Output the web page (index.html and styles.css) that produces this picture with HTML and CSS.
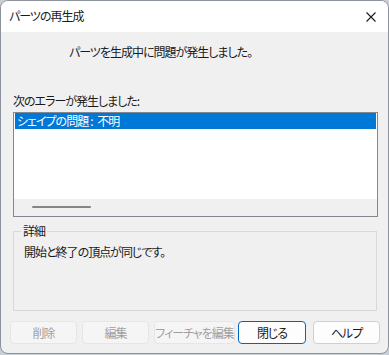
FILE: index.html
```html
<!DOCTYPE html>
<html lang="ja">
<head>
  <meta charset="UTF-8" />
  <title>パーツの再生成</title>
  <link rel="stylesheet" href="styles.css">
</head>
<body>

<div class="window">
  <div class="titlebar">
    <span class="title">パーツの再生成</span>
    <svg class="close" width="10" height="10" viewBox="0 0 10 10">
      <path d="M0.5 0.5 L9.5 9.5 M9.5 0.5 L0.5 9.5" stroke="#1a1a1a" stroke-width="1.1" fill="none"/>
    </svg>
  </div>

  <div class="content">
    <p class="message">パーツを生成中に問題が発生しました。</p>

    <p class="label">次のエラーが発生しました:</p>
    <div class="listbox">
      <div class="list-items">
        <div class="list-item selected">シェイプの問題<span class="colon">:</span> 不明</div>
      </div>
      <div class="hscroll"><span class="thumb"></span></div>
    </div>

    <fieldset class="group">
      <legend>詳細</legend>
      <p class="detail">開始と終了の頂点が同じです。</p>
    </fieldset>

    <div class="buttons">
      <button class="btn" disabled>削除</button>
      <button class="btn" disabled>編集</button>
      <button class="btn wide" disabled>フィーチャを編集</button>
      <button class="btn default">閉じる</button>
      <button class="btn">ヘルプ</button>
    </div>
  </div>
</div>

</body>
</html>
```

FILE: styles.css
```css
* {
  box-sizing: border-box;
}

body {
  margin: 0;
  background: #c8ced8;
  font-family: "Noto Sans CJK JP", "Noto Sans", sans-serif;
  font-size: 12px;
  font-feature-settings: "palt";
  letter-spacing: -1px;
  color: #1a1a1a;
}

.window {
  width: 389px;
  height: 354px;
  background: #f0f0f0;
  border: 1px solid #8d939c;
  border-radius: 8px;
  overflow: hidden;
}

.titlebar {
  height: 31px;
  background: #fff;
  display: flex;
  align-items: center;
  justify-content: space-between;
  padding: 0 12px 0 8px;
}

.title {
  line-height: 16px;
  margin-top: -1px;
}

.close {
  margin-top: 1px;
}

.content {
  padding: 0 11px 0 12px;
}

p {
  margin: 0;
  line-height: 16px;
}

.message {
  margin-top: 12px;
  padding-left: 56px;
}

.label {
  margin-top: 33px;
}

.listbox {
  margin-top: 3px;
  width: 365px;
  height: 105px;
  border: 1px solid #828790;
  background: #fff;
  display: flex;
  flex-direction: column;
}

.list-items {
  flex: 1;
  padding: 0 1px;
}

.list-item {
  height: 16px;
  line-height: 15px;
  padding-left: 2px;
  white-space: pre;
}

.list-item .colon {
  margin: 0 3px 0 2px;
}

.list-item.selected {
  background: #0078d7;
  color: #fff;
}

.hscroll {
  height: 17px;
  background: #f0f0f0;
  padding: 7px 0 0 18px;
}

.thumb {
  display: block;
  width: 59px;
  height: 2px;
  border-radius: 1px;
  background: #858585;
}

.group {
  margin: 6px 0 0;
  width: 364px;
  height: 88px;
  border: 1px solid #d9d9d9;
  padding: 5px 10px 0;
}

.group legend {
  padding: 0 2px;
  margin-left: -3px;
  line-height: 16px;
}

.buttons {
  display: flex;
  margin: 10px 0 0 -3px;
}

.btn {
  flex: none;
  height: 23px;
  width: 67px;
  margin-right: 5px;
  font: inherit;
  font-feature-settings: "palt";
  letter-spacing: -1px;
  line-height: 16px;
  padding: 0;
  white-space: nowrap;
  overflow: hidden;
  background: #fdfdfd;
  color: #1a1a1a;
  border: 1px solid #d0d0d0;
  border-radius: 4px;
}

.btn:last-child {
  margin-right: 0;
}

.btn.wide {
  width: 81px;
  margin-right: 3px;
}

.btn:disabled {
  background: #f5f5f5;
  color: #a0a0a0;
  border-color: #e6e6e6;
}

.btn.default {
  width: 68px;
  border: 1px solid #0067c0;
  margin-right: 7px;
}
```
